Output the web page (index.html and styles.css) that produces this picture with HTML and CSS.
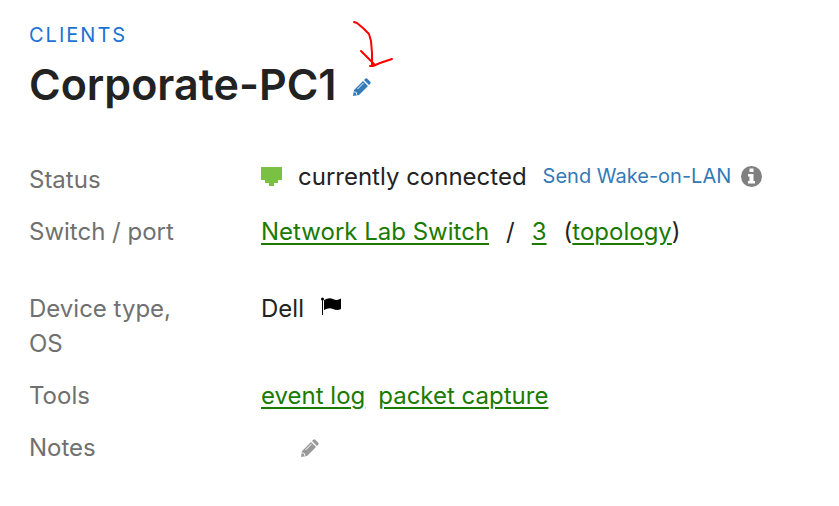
FILE: index.html
```
<!DOCTYPE html>
<html lang="en">
<head>
    <meta charset="UTF-8">
    <meta name="viewport" content="width=device-width, initial-scale=1.0">
    <title>Corporate-PC1 - Clients</title>
    <link rel="stylesheet" href="styles.css">
</head>
<body>
<header class="page-header">
    <a class="breadcrumb" href="#">CLIENTS</a>
    <div class="title-row">
        <h1>Corporate-PC1</h1>
        <button class="icon-button edit-name" type="button" aria-label="Edit name">
            <svg width="18" height="18" viewBox="0 0 18 18">
                <path fill="currentColor" d="M0 18 L1 12 L10 3 L15 8 L6 17 Z M11 2 L12.5 .6 Q13.4 0 14.3 .7 L17.3 3.7 Q18 4.6 17.4 5.5 L16 7 Z"/>
                <path fill="none" stroke="#fff" stroke-width="1" d="M4.5 11 L10.5 5 M1.2 14 L2.5 14 L3.5 15 L3.8 16.8"/>
            </svg>
            <svg class="arrow" width="42" height="48" viewBox="0 0 42 48" fill="none" stroke="#f00" stroke-width="2" stroke-linecap="round" stroke-linejoin="round">
                <path d="M2 2 L5 3 L11 8 L17 14 L19 21 L20 33 V45 M9 31 L22 44 M18 46 H21 L28 43 L40 39"/>
            </svg>
        </button>
    </div>
</header>
<dl class="details">
    <dt>Status</dt>
    <dd class="status">
        <svg class="port" width="21" height="19" viewBox="0 0 21 19">
            <path fill="#7ac143" d="M0 0H21V13H17V16H13V19H8V16H4V13H0Z"/>
        </svg>
        <span class="state">currently connected</span>
        <a class="wake" href="#">Send Wake-on-LAN</a>
        <svg class="info" width="21" height="21" viewBox="0 0 21 21">
            <circle cx="10.5" cy="10.5" r="10.5" fill="#808080"/>
            <path fill="#fff" d="M8.5 2.5H12.5V6H8.5Z M7 8H12.5V15H14V17.5H7V15H8.5V10.5H7Z"/>
        </svg>
    </dd>
    <dt>Switch / port</dt>
    <dd class="switch">
        <a href="#">Network Lab Switch</a>
        <span>/</span>
        <a href="#">3</a>
        <span>(<a href="#">topology</a>)</span>
    </dd>
    <dt class="section-start">Device type, OS</dt>
    <dd class="section-start device">
        <span>Dell</span>
        <svg class="flag" width="21" height="18" viewBox="0 0 21 18">
            <path fill="#000" d="M1 3H2V18H1Z M3 3 Q8 0 12 2 Q16 4 20 1.5 V12 Q16 14 12 12 Q8 10 3 13 Z"/>
            <circle cx="1.5" cy="2" r="1.5" fill="#000"/>
        </svg>
    </dd>
    <dt>Tools</dt>
    <dd class="tools"><a href="#">event log</a><a href="#">packet capture</a></dd>
    <dt>Notes</dt>
    <dd class="notes">
        <button class="icon-button" type="button" aria-label="Edit notes">
            <svg width="18" height="18" viewBox="0 0 18 18">
                <path fill="currentColor" d="M0 18 L1 12 L10 3 L15 8 L6 17 Z M11 2 L12.5 .6 Q13.4 0 14.3 .7 L17.3 3.7 Q18 4.6 17.4 5.5 L16 7 Z"/>
                <path fill="none" stroke="#fff" stroke-width="1" d="M4.5 11 L10.5 5 M1.2 14 L2.5 14 L3.5 15 L3.8 16.8"/>
            </svg>
        </button>
    </dd>
</dl>
</body>
</html>
```
FILE: styles.css
```
body {
    margin: 0;
    padding: 20px 29px;
    background-color: #fff;
    color: #222;
    font-family: Inter, "Liberation Sans", sans-serif;
    font-size: 24px;
    line-height: 35px;
}
.breadcrumb {
    display: block;
    color: #1b72d4;
    font-size: 20px;
    line-height: 30px;
    letter-spacing: 2px;
    text-decoration: none;
}
.title-row {
    display: flex;
    align-items: center;
    gap: 16px;
}
h1 {
    margin: 0;
    font-size: 43px;
    line-height: 68px;
    font-weight: 600;
}
.icon-button {
    display: flex;
    padding: 0;
    border: 0;
    background: none;
    color: #999;
    cursor: pointer;
}
.edit-name {
    position: relative;
    color: #337ab7;
    margin-top: 6px;
}
.arrow {
    position: absolute;
    left: -1px;
    bottom: 28px;
}
.details {
    display: grid;
    grid-template-columns: 160px 1fr;
    column-gap: 72px;
    row-gap: 17px;
    margin: 44px 0 0;
}
dt {
    color: #707070;
}
dd {
    display: flex;
    align-items: center;
    margin: 0;
    height: 35px;
}
dd a {
    color: #1b7a00;
    text-decoration-thickness: 2px;
    text-underline-offset: 3px;
}
.section-start {
    margin-top: 25px;
}
.status {
    height: 29px;
}
.state {
    margin: 0 16px;
}
.wake {
    color: #337ab7;
    font-size: 20px;
    text-decoration: none;
}
.info {
    margin-left: 10px;
}
.switch,
.device {
    gap: 17px;
}
.flag {
    margin-bottom: 6px;
}
.tools {
    gap: 13px;
}
.notes {
    padding-left: 40px;
}
```
